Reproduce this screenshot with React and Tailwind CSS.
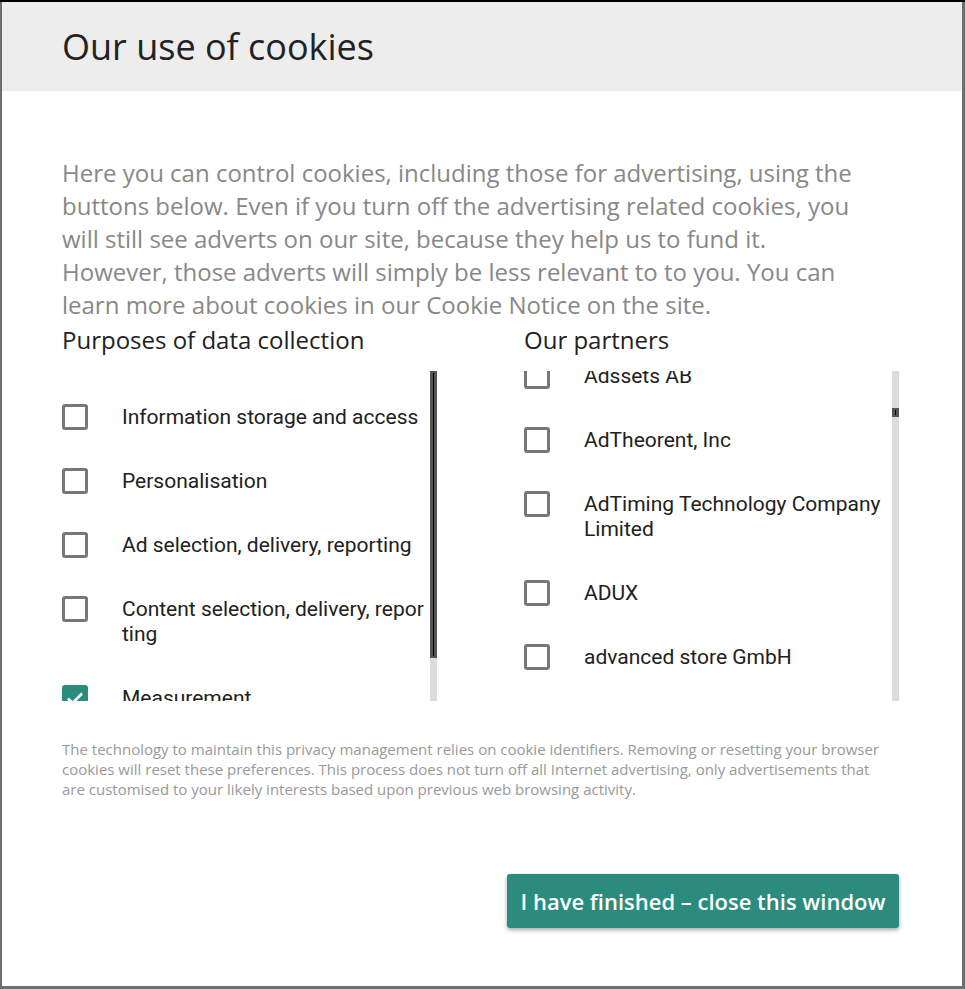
import React, { useLayoutEffect, useRef } from "react";

const purposes = [
    { name: "Information storage and access", checked: false },
    { name: "Personalisation", checked: false },
    { name: "Ad selection, delivery, reporting", checked: false },
    { name: "Content selection, delivery, reporting", checked: false },
    { name: "Measurement", checked: true },
];

const partners = [
    "Accorp Sp. z o.o.",
    "Adform",
    "Adhese",
    "Adikteev",
    "Adloox SA",
    "Adssets AB",
    "AdTheorent, Inc",
    "AdTiming Technology Company Limited",
    "ADUX",
    "advanced store GmbH",
    "ADventori SAS",
    "Adyoulike",
];

function Checkbox({ checked }) {
    if (checked) {
        return (
            <span className="w-[26px] h-[26px] shrink-0 rounded-[3px] bg-[#2b8c7e] flex items-center justify-center">
                <svg width="18" height="14" viewBox="0 0 18 14" fill="none">
                    <path d="M2 7.5l4.5 4.5L16 2.5" stroke="white" strokeWidth="2.6" />
                </svg>
            </span>
        );
    }
    return <span className="w-[26px] h-[26px] shrink-0 rounded-[3px] border-[3px] border-[#777]" />;
}

function Row({ label, checked, rowRef, breakAll }) {
    return (
        <label ref={rowRef} className="flex items-start gap-[34px] mb-[38px] cursor-pointer">
            <Checkbox checked={checked} />
            <span
                className={breakAll
                    ? "pt-px text-[21px] leading-[25px] text-[#212121] break-all"
                    : "pt-px text-[21px] leading-[25px] text-[#212121]"}
                style={{ fontFamily: "Roboto, sans-serif" }}
            >
                {label}
            </span>
        </label>
    );
}

function Scrollbar({ thumbTop, thumbHeight }) {
    return (
        <div className="w-[7px] shrink-0 bg-[#dcdcdc] relative">
            <div className="absolute left-0 right-0 bg-[#555] flex justify-center py-[2px]" style={{ top: thumbTop, height: thumbHeight }}>
                <div className="w-px h-full bg-black" />
            </div>
        </div>
    );
}

export default function App() {
    const scrollRef = useRef(null);
    const targetRef = useRef(null);

    useLayoutEffect(() => {
        // partner list is scrolled a little past the start
        if (scrollRef.current && targetRef.current) {
            scrollRef.current.scrollTop = targetRef.current.offsetTop + 8;
        }
    }, []);

    return (
        <div className="w-[965px] h-[989px] bg-[#6e6e6e] border-t-2 border-black pl-[2px] pr-[3px] pb-[3px]" style={{ fontFamily: "'Open Sans', sans-serif" }}>
            <div className="w-[960px] h-full bg-white flex flex-col">
                <div className="h-[89px] bg-[#ededed] flex items-center px-[60px] shrink-0">
                    <h1 className="text-[36px] text-[#222] leading-none">Our use of cookies</h1>
                </div>

                <div className="px-[60px] pt-[65px] flex flex-col">
                    <p className="text-[24px] leading-[33px] text-[#888] pr-[24px]">
                        Here you can control cookies, including those for advertising, using the buttons below. Even if you turn off the advertising related cookies, you will still see adverts on our site, because they help us to fund it. However, those adverts will simply be less relevant to to you. You can learn more about cookies in our Cookie Notice on the site.
                    </p>

                    <div className="flex gap-[87px] mt-[2px]">
                        <div className="w-[375px] flex flex-col">
                            <h2 className="text-[24px] leading-[33px] text-[#222] h-[48px]">Purposes of data collection</h2>
                            <div className="flex h-[330px]">
                                <div className="flex-1 overflow-hidden pt-[33px] pr-[2px]">
                                    {purposes.map((p) => (
                                        <Row key={p.name} label={p.name} checked={p.checked} breakAll />
                                    ))}
                                </div>
                                <Scrollbar thumbTop={0} thumbHeight={287} />
                            </div>
                        </div>

                        <div className="w-[375px] flex flex-col">
                            <h2 className="text-[24px] leading-[33px] text-[#222] h-[48px]">Our partners</h2>
                            <div className="flex h-[330px]">
                                <div ref={scrollRef} className="flex-1 overflow-hidden relative pr-[4px]">
                                    <div className="pt-[33px]">
                                        {partners.map((p) => (
                                            <Row key={p} label={p} rowRef={p === "Adssets AB" ? targetRef : undefined} />
                                        ))}
                                    </div>
                                </div>
                                <Scrollbar thumbTop={37} thumbHeight={9} />
                            </div>
                        </div>
                    </div>

                    <p className="text-[15px] leading-[20px] text-[#999] mt-[38px] pr-[6px]">
                        The technology to maintain this privacy management relies on cookie identifiers. Removing or resetting your browser cookies will reset these preferences. This process does not turn off all Internet advertising, only advertisements that are customised to your likely interests based upon previous web browsing activity.
                    </p>

                    <div className="flex justify-end mt-[75px]">
                        <button className="h-[54px] w-[392px] mr-[3px] rounded-[3px] bg-[#2b8c7e] text-white text-[22px] font-semibold shadow-[0_2px_4px_rgba(0,0,0,0.35)]">
                            I have finished – close this window
                        </button>
                    </div>
                </div>
            </div>
        </div>
    );
}
